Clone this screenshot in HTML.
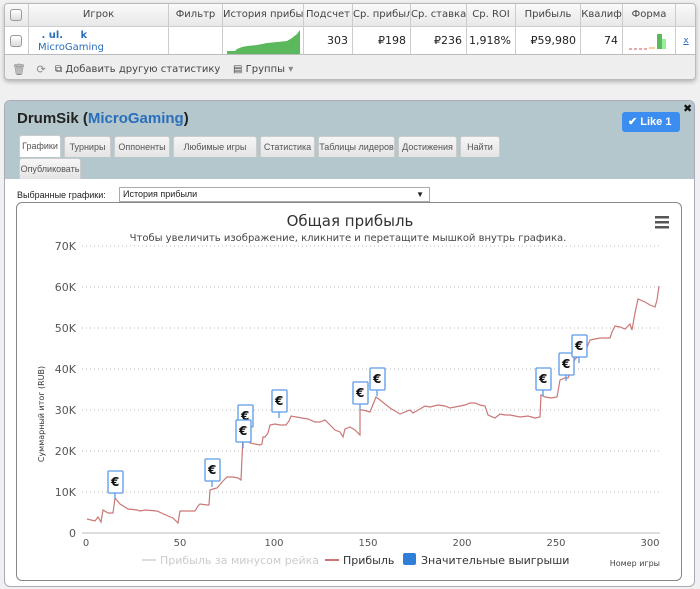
<!DOCTYPE html>
<html><head><meta charset="utf-8"><style>
*{box-sizing:border-box;margin:0;padding:0}
body{width:700px;height:589px;background:#f0f0f0;font-family:"DejaVu Sans","Liberation Sans",sans-serif;font-size:10px;color:#333;position:relative;overflow:hidden}
.abs{position:absolute}
.tbl{left:4px;top:3px;width:692px;height:77px;background:#eee;border:1px solid #bbb;border-radius:4px;box-shadow:0 2px 4px rgba(0,0,0,.25);overflow:hidden}
.hd{position:absolute;top:0;height:23px;background:linear-gradient(#fafafa,#e8e8e8);border-right:1px solid #ccc;border-bottom:1px solid #ccc;text-align:center;line-height:22px;font-size:10px;color:#444;white-space:nowrap;overflow:hidden}
.cl{position:absolute;top:23px;height:28px;background:#fff;border-right:1px solid #ccc;border-bottom:1px solid #bbb;text-align:right;line-height:28px;padding-right:4px;font-size:11px;color:#222}
.cb{position:absolute;width:12px;height:12px;border:1px solid #999;border-radius:3px;background:linear-gradient(#fff,#ddd)}
.panel{left:4px;top:100px;width:691px;height:487px;background:#fff;border-radius:6px;border:1px solid #aab;overflow:hidden}
.ph{position:absolute;left:0;top:0;width:100%;height:78px;background:#b4c7cd}
.tab{position:absolute;height:21px;background:linear-gradient(#f6f6f6,#e4e4e4);border:1px solid #ccc;border-bottom:none;border-radius:3px 3px 0 0;font-family:"Liberation Sans",sans-serif;font-size:9px;line-height:20px;text-align:center;color:#555;white-space:nowrap;overflow:hidden}
</style></head><body>
<div class="abs tbl">
 <div class="hd" style="left:0;width:24px"><div class="cb" style="left:5px;top:5px"></div></div>
 <div class="hd" style="left:24px;width:140px">Игрок</div>
 <div class="hd" style="left:164px;width:54px">Фильтр</div>
 <div class="hd" style="left:218px;width:81px">История прибыль</div>
 <div class="hd" style="left:299px;width:49px">Подсчет</div>
 <div class="hd" style="left:348px;width:58px">Ср. прибыль</div>
 <div class="hd" style="left:406px;width:56px">Ср. ставка</div>
 <div class="hd" style="left:462px;width:49px">Ср. ROI</div>
 <div class="hd" style="left:511px;width:65px">Прибыль</div>
 <div class="hd" style="left:576px;width:42px">Квалиф</div>
 <div class="hd" style="left:618px;width:53px">Форма</div>
 <div class="hd" style="left:671px;width:21px"></div>
 <div class="cl" style="left:0;width:24px"><div class="cb" style="left:5px;top:8px"></div></div>
 <div class="cl" style="left:24px;width:140px;text-align:left;padding-left:9px;line-height:12px;padding-top:3px;color:#2a6ebb;font-size:10px"><b>&nbsp;.  ul.&nbsp;&nbsp;&nbsp;&nbsp;&nbsp;k</b><br>MicroGaming</div>
 <div class="cl" style="left:164px;width:54px"></div>
 <div class="cl" style="left:218px;width:81px"><svg class="abs" style="left:4px;top:3px" width="73" height="24"><path d="M0 24V21L8 21L10 19L15 17L20 16L30 15L40 13L50 12L60 11L65 8L70 4L73 0V24Z" fill="#5cb85c"/></svg></div>
 <div class="cl" style="left:299px;width:49px">303</div>
 <div class="cl" style="left:348px;width:58px">₽198</div>
 <div class="cl" style="left:406px;width:56px">₽236</div>
 <div class="cl" style="left:462px;width:49px">1,918%</div>
 <div class="cl" style="left:511px;width:65px">₽59,980</div>
 <div class="cl" style="left:576px;width:42px">74</div>
 <div class="cl" style="left:618px;width:53px"><svg class="abs" style="left:6px;top:6px" width="40" height="20"><path d="M0 16H20" stroke="#c55" stroke-dasharray="3 2"/><path d="M20 15H26" stroke="#f0a040"/><rect x="28" y="1" width="5" height="15" fill="#5cb85c"/><rect x="33" y="6" width="4" height="10" fill="#9e9"/></svg></div>
 <div class="cl" style="left:671px;width:21px;color:#2a6ebb;text-align:center;padding:0;text-decoration:underline;font-size:9px">x</div>
 <div class="abs" style="left:7px;top:59px;font-size:11px;color:#888">🗑&nbsp;&nbsp;&nbsp;⟳</div>
 <div class="abs" style="left:50px;top:60px;font-size:10px;color:#444">⧉ Добавить другую статистику&nbsp;&nbsp;&nbsp;&nbsp;▤ Группы <span style="color:#888">▾</span></div>
</div>

<div class="abs panel">
 <div class="ph"></div>
 <div class="abs" style="left:12px;top:9px;font-size:15px;font-family:'Liberation Sans',sans-serif;color:#222;font-weight:bold">DrumSik (<span style="color:#2a6ebb">MicroGaming</span>)</div>
 <div class="abs" style="left:617px;top:11px;width:58px;height:20px;background:#3b8ef0;border-radius:3px;color:#fff;font-weight:bold;font-family:'Liberation Sans',sans-serif;font-size:11px;line-height:20px;padding-left:6px">✔ Like 1</div>
 <div class="abs" style="left:678px;top:1px;font-size:11px;font-weight:bold;color:#111">✖</div>
 <div class="tab" style="left:14px;top:34px;width:42px;background:#fff;height:22px">Графики</div>
 <div class="tab" style="left:59px;top:35px;width:47px">Турниры</div>
 <div class="tab" style="left:109px;top:35px;width:56px">Оппоненты</div>
 <div class="tab" style="left:168px;top:35px;width:84px">Любимые игры</div>
 <div class="tab" style="left:255px;top:35px;width:55px">Статистика</div>
 <div class="tab" style="left:313px;top:35px;width:77px">Таблицы лидеров</div>
 <div class="tab" style="left:393px;top:35px;width:59px">Достижения</div>
 <div class="tab" style="left:455px;top:35px;width:40px">Найти</div>
 <div class="tab" style="left:14px;top:57px;width:62px">Опубликовать</div>
 <div class="abs" style="left:12px;top:89px;font-size:9px;font-family:'Liberation Sans',sans-serif;color:#222">Выбранные графики:</div>
 <div class="abs" style="left:114px;top:86px;width:311px;height:15px;border:1px solid #aaa;font-size:9px;font-family:'Liberation Sans',sans-serif;line-height:13px;padding-left:3px;color:#222">История прибыли<span style="position:absolute;right:5px;font-size:8px">▼</span></div>
</div>

<div class="abs" style="left:16px;top:202px;width:666px;height:379px;border:1px solid #888;border-radius:6px;background:#fff"></div>
<svg class="abs" style="left:0;top:0" width="700" height="589" font-family="DejaVu Sans, Liberation Sans, sans-serif">
 <text x="350" y="226" text-anchor="middle" font-size="15" fill="#333">Общая прибыль</text>
 <text x="348" y="241" text-anchor="middle" font-size="10" fill="#444">Чтобы увеличить изображение, кликните и перетащите мышкой внутрь графика.</text>
 <g fill="#555"><rect x="655" y="216" width="14" height="2.5"/><rect x="655" y="221" width="14" height="2.5"/><rect x="655" y="226" width="14" height="2.5"/></g>
 <g stroke="#bbb" stroke-dasharray="1 3"><path d="M82 246H660M82 287H660M82 328H660M82 369H660M82 410H660M82 451H660M82 492H660"/></g>
 <path d="M82 533H660" stroke="#bbb"/>
 <g font-size="11" fill="#555" text-anchor="end"><text x="76" y="250">70K</text><text x="76" y="291">60K</text><text x="76" y="332">50K</text><text x="76" y="373">40K</text><text x="76" y="414">30K</text><text x="76" y="455">20K</text><text x="76" y="496">10K</text><text x="76" y="537">0</text></g>
 <g font-size="10" fill="#555" text-anchor="middle"><text x="86" y="546">0</text><text x="180" y="546">50</text><text x="274" y="546">100</text><text x="368" y="546">150</text><text x="462" y="546">200</text><text x="556" y="546">250</text><text x="650" y="546">300</text></g>
 <text transform="translate(44,414) rotate(-90)" font-size="8" fill="#333" text-anchor="middle">Суммарный итог (RUB)</text>
 <path fill="none" stroke="#c77" stroke-width="1.2" d="M87 519L95 521L98 517L101 522L103 510L108 513L113 513L115 498L120 504L128 509L137 510L140 511L145 510L157 511L168 516L173 518L178 523L180 511L188 511L195 511L198 506L200 504L207 505L209 505L210 490L213 489L217 488L223 481L227 477L233 477L238 478L241 480L243 436L245 437L250 443L255 444L260 445L262 444L263 437L265 437L268 433L270 425L275 424L280 425L283 425L286 425L289 421L291 416L302 418L308 419L315 422L320 422L325 420L330 425L335 430L340 432L343 437L345 429L350 427L355 430L360 435L360 410L363 410L370 412L376 397L380 400L385 404L390 408L400 414L410 410L413 413L420 409L425 406L430 407L438 405L445 406L450 408L455 407L460 406L465 405L470 403L475 403L480 405L485 406L488 415L495 418L500 414L505 415L510 415L520 417L528 416L535 418L540 417L541 395L545 397L551 398L557 397L560 380L565 378L568 378L575 359L580 355L585 352L590 340L595 339L600 338L610 338L612 332L615 326L620 327L625 329L630 324L632 330L635 313L638 299L645 302L650 305L655 307L657 300L659 286"/>
 <g stroke="#5b9be8" stroke-width="1.3" fill="#fff" font-size="12" font-weight="bold">
  <g transform="translate(108,471)"><path d="M7 22V28"/><rect width="15" height="22" rx="1"/><text x="3" y="15" stroke="none" fill="#111">€</text></g>
  <g transform="translate(205,459)"><path d="M7 22V28"/><rect width="15" height="22" rx="1"/><text x="3" y="15" stroke="none" fill="#111">€</text></g>
  <g transform="translate(238,405)"><path d="M7 22V28"/><rect width="15" height="22" rx="1"/><text x="3" y="15" stroke="none" fill="#111">€</text></g>
  <g transform="translate(236,420)"><path d="M7 22V28"/><rect width="15" height="22" rx="1"/><text x="3" y="15" stroke="none" fill="#111">€</text></g>
  <g transform="translate(272,390)"><path d="M7 22V28"/><rect width="15" height="22" rx="1"/><text x="3" y="15" stroke="none" fill="#111">€</text></g>
  <g transform="translate(353,382)"><path d="M7 22V28"/><rect width="15" height="22" rx="1"/><text x="3" y="15" stroke="none" fill="#111">€</text></g>
  <g transform="translate(370,368)"><path d="M7 22V28"/><rect width="15" height="22" rx="1"/><text x="3" y="15" stroke="none" fill="#111">€</text></g>
  <g transform="translate(536,368)"><path d="M7 22V28"/><rect width="15" height="22" rx="1"/><text x="3" y="15" stroke="none" fill="#111">€</text></g>
  <g transform="translate(559,353)"><path d="M7 22V28"/><rect width="15" height="22" rx="1"/><text x="3" y="15" stroke="none" fill="#111">€</text></g>
  <g transform="translate(572,335)"><path d="M7 22V28"/><rect width="15" height="22" rx="1"/><text x="3" y="15" stroke="none" fill="#111">€</text></g>
 </g>
 <path d="M142 560H156" stroke="#ddd" stroke-width="2"/>
 <text x="160" y="564" font-size="11" fill="#ccc">Прибыль за минусом рейка</text>
 <path d="M325 560H339" stroke="#c77" stroke-width="2"/>
 <text x="343" y="564" font-size="11" fill="#333">Прибыль</text>
 <rect x="403" y="553" width="13" height="12" rx="2" fill="#2f7ed8"/>
 <text x="421" y="564" font-size="11" fill="#333">Значительные выигрыши</text>
 <text x="660" y="566" font-size="8" fill="#444" text-anchor="end">Номер игры</text>
</svg>
</body></html>
